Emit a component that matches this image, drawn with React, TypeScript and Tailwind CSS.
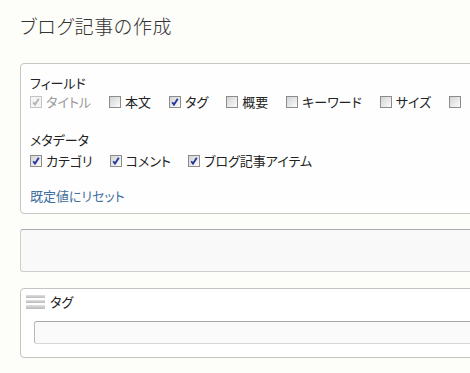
import React from "react";

const font = {
  fontFamily: '"Noto Sans CJK JP", "Noto Sans", sans-serif',
};

function Box({ checked, disabled }: { checked?: boolean; disabled?: boolean }) {
  return (
    <span
      className={
        "relative inline-block w-[12px] h-[12px] shrink-0 border " +
        (disabled ? "border-[#c4c4c4] bg-[#f4f4f4]" : "border-[#8c8c8c] bg-gradient-to-br from-[#d4d4d4] to-[#fbfbfb]")
      }
    >
      {checked && (
        <svg viewBox="0 0 10 10" className="absolute left-[0px] top-[0px] w-[10px] h-[10px]">
          <path
            d="M2.2 5.2 L4 7.6 L7.8 1.8"
            fill="none"
            stroke={disabled ? "#b4b4b4" : "#23379a"}
            strokeWidth="1.8"
          />
        </svg>
      )}
    </span>
  );
}

function Item({ label, checked, disabled }: { label?: string; checked?: boolean; disabled?: boolean }) {
  return (
    <span className="flex items-center gap-[4px] shrink-0">
      <Box checked={checked} disabled={disabled} />
      {label && <span className={disabled ? "text-[#9a9a9a]" : "text-[#222]"}>{label}</span>}
    </span>
  );
}

export default function App() {
  return (
    <div
      className="w-[470px] h-[373px] overflow-hidden bg-[#fdfdf9] pl-5 pt-[16px] [font-feature-settings:'palt']"
      style={font}
    >
      <h1 className="text-[19px] leading-[20px] text-[#333] tracking-[0.7px] font-light">ブログ記事の作成</h1>

      <div className="mt-[27px] w-[520px] h-[151px] rounded-[4px] border border-[#c6c6c6] bg-[#fefefe] pl-[9px] pt-[11px] text-[13px] leading-[16px]">
        <div className="text-[#222]">フィールド</div>
        <div className="mt-[3px] flex gap-[18px] whitespace-nowrap">
          <Item label="タイトル" checked disabled />
          <Item label="本文" />
          <Item label="タグ" checked />
          <Item label="概要" />
          <Item label="キーワード" />
          <Item label="サイズ" />
          <Item />
        </div>
        <div className="mt-[22px] text-[#222]">メタデータ</div>
        <div className="mt-[5px] flex gap-[17px] whitespace-nowrap">
          <Item label="カテゴリ" checked />
          <Item label="コメント" checked />
          <Item label="ブログ記事アイテム" checked />
        </div>
        <div className="mt-[19px] text-[#3f6f9e]">既定値にリセット</div>
      </div>

      <div className="mt-[15px] w-[520px] h-[43px] rounded-[3px] border border-[#cfcfcf] border-t-[#a9a9a9] bg-[#f9f9f9]" />

      <div className="mt-[16px] w-[520px] h-[70px] rounded-[4px] border border-[#c4c4c4] bg-white pl-[5px] pt-[5px]">
        <div className="flex items-center gap-[5px]">
          <div className="flex flex-col gap-[2px] w-[19px]">
            <span className="block h-[3px] bg-gradient-to-b from-[#e2e2e2] to-[#b9b9b9]" />
            <span className="block h-[3px] bg-gradient-to-b from-[#e2e2e2] to-[#b9b9b9]" />
            <span className="block h-[4px] bg-gradient-to-b from-[#e2e2e2] to-[#b9b9b9]" />
          </div>
          <span className="text-[13px] leading-[16px] text-[#222]">タグ</span>
        </div>
        <div className="ml-[8px] mt-[11px] h-[23px] rounded-[3px] border border-[#d6d6d6] border-t-[#a8a8a8] border-l-[#b8b8b8] bg-[#fafafa]" />
      </div>
    </div>
  );
}
